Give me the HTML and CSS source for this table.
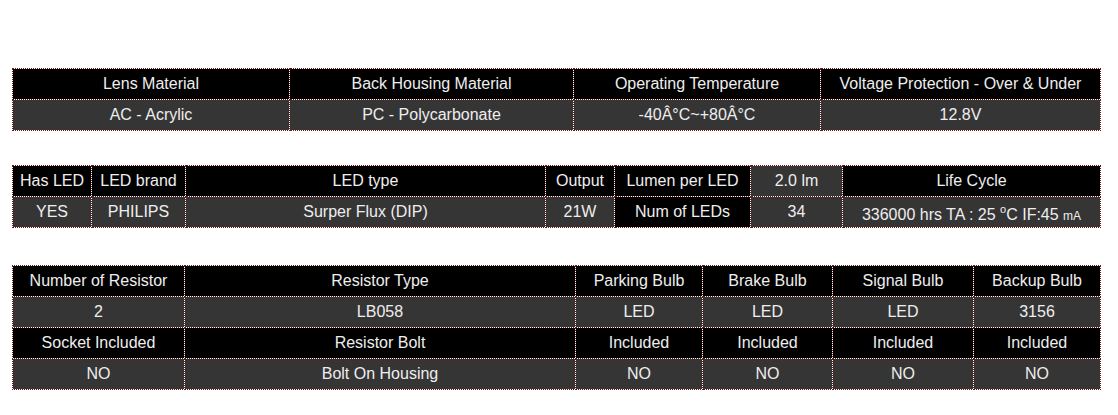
FILE: index.html
```html
<!DOCTYPE html>
<html>
<head>
<meta charset="utf-8">
<link rel="stylesheet" href="styles.css">
</head>
<body>
<div class="page">
  <table class="spec t1">
    <colgroup><col style="width:277px"><col style="width:284px"><col style="width:247px"><col style="width:280px"></colgroup>
    <tr class="head"><th>Lens Material</th><th>Back Housing Material</th><th>Operating Temperature</th><th>Voltage Protection - Over &amp; Under</th></tr>
    <tr class="val"><td>AC - Acrylic</td><td>PC - Polycarbonate</td><td>-40Â°C~+80Â°C</td><td>12.8V</td></tr>
  </table>

  <table class="spec t2">
    <colgroup><col style="width:79px"><col style="width:94px"><col style="width:360px"><col style="width:69px"><col style="width:136px"><col style="width:92px"><col style="width:258px"></colgroup>
    <tr class="head"><th>Has LED</th><th>LED brand</th><th>LED type</th><th>Output</th><th>Lumen per LED</th><td class="grey">2.0 lm</td><th>Life Cycle</th></tr>
    <tr class="val"><td>YES</td><td>PHILIPS</td><td>Surper Flux (DIP)</td><td>21W</td><th class="black">Num of LEDs</th><td>34</td><td class="life">336000 hrs TA : 25 <sup>o</sup>C IF:45 <small>mA</small></td></tr>
  </table>

  <table class="spec t3">
    <colgroup><col style="width:172px"><col style="width:391px"><col style="width:127px"><col style="width:130px"><col style="width:141px"><col style="width:127px"></colgroup>
    <tr class="head"><th>Number of Resistor</th><th>Resistor Type</th><th>Parking Bulb</th><th>Brake Bulb</th><th>Signal Bulb</th><th>Backup Bulb</th></tr>
    <tr class="val"><td>2</td><td>LB058</td><td>LED</td><td>LED</td><td>LED</td><td>3156</td></tr>
    <tr class="head"><th>Socket Included</th><th>Resistor Bolt</th><th>Included</th><th>Included</th><th>Included</th><th>Included</th></tr>
    <tr class="val"><td>NO</td><td>Bolt On Housing</td><td>NO</td><td>NO</td><td>NO</td><td>NO</td></tr>
  </table>
</div>
</body>
</html>
```

FILE: styles.css
```css
html, body {
  margin: 0;
  padding: 0;
  background: #ffffff;
}
body {
  font-family: "Liberation Sans", Arial, sans-serif;
}
.page {
  padding: 68px 18px 0 12px;
  display: flex;
  flex-direction: column;
  gap: 34px;
}
.spec {
  width: 1088px;
  table-layout: fixed;
  border-collapse: collapse;
  border: 1px dotted #6e1717;
}
.spec th, .spec td {
  border: 1px dotted #6e1717;
  height: 30px;
  padding: 0 2px;
  text-align: center;
  vertical-align: middle;
  font-size: 16px;
  font-weight: normal;
  color: #eeeeee;
  white-space: nowrap;
  overflow: hidden;
}
.head th, .head td { background: #000000; }
.val td, .val th { background: #363535; }
.spec td.grey { background: #363535; }
.spec th.black { background: #000000; }
.t3 { margin-top: 3px; }
.spec td.life {
  padding-top: 5px;
  height: 25px;
}
.life sup {
  font-size: 11px;
  vertical-align: 7px;
  line-height: 0;
}
.life small {
  font-size: 12px;
}
```
